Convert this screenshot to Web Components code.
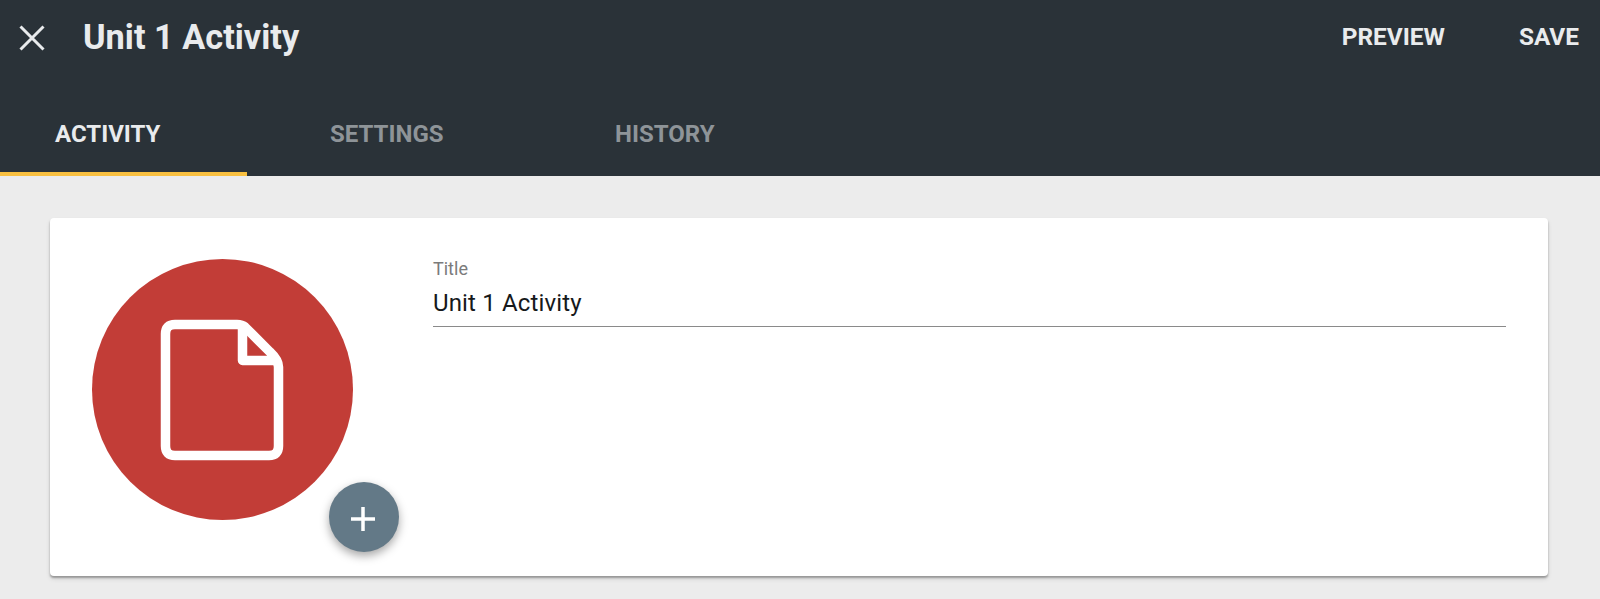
<!DOCTYPE html>
<html>
<head>
<meta charset="utf-8">
<title>Unit 1 Activity</title>
<style>
  html, body { margin: 0; height: 100%; }
  body { background: #ececec; font-family: Roboto, sans-serif; overflow: hidden; }
</style>
</head>
<body>
<activity-editor></activity-editor>

<script>
class TopBar extends HTMLElement {
  constructor() {
    super();
    const shadow = this.attachShadow({ mode: 'open' });
    shadow.innerHTML = `
      <style>
      :host {
        display: flex;
        align-items: center;
        height: 75px;
        color: #e9ebed;
      }
      svg { display: block; width: 26px; height: 26px; margin-left: 19px; }
      h1 {
        flex: 1;
        margin: 0 0 1px 38px;
        font-size: 34.300px;
        font-weight: 700;
        line-height: 72px;
      }
      .action { font-size: 24.400px; font-weight: 700; margin-bottom: 3px; }
      .preview { margin-right: 74px; }
      .save { margin-right: 21px; }
      </style>
      <svg viewBox="0 0 26 26"><path d="M1.500 1.500L24.500 24.500M24.500 1.500L1.500 24.500" stroke="#e9ebed" stroke-width="3" fill="none"/></svg>
      <h1><slot></slot></h1>
      <span class="action preview">PREVIEW</span>
      <span class="action save">SAVE</span>
    `;
  }
}

class TabBar extends HTMLElement {
  constructor() {
    super();
    const shadow = this.attachShadow({ mode: 'open' });
    shadow.innerHTML = `
      <style>
      :host { display: flex; height: 101px; }
      </style>
      <slot></slot>
    `;
  }
}

class TabItem extends HTMLElement {
  constructor() {
    super();
    const shadow = this.attachShadow({ mode: 'open' });
    shadow.innerHTML = `
      <style>
      :host {
        display: flex;
        box-sizing: border-box;
        width: 285px;
        height: 101px;
        padding: 45px 0 0 83px;
        font-size: 24px;
        font-weight: 700;
        color: #8e9498;
      }
      :host([active]) {
        width: 247px;
        padding-left: 55px;
        color: #e9ebed;
        border-bottom: 4px solid #f9c040;
      }
      </style>
      <slot></slot>
    `;
  }
}

class AvatarPicker extends HTMLElement {
  constructor() {
    super();
    const shadow = this.attachShadow({ mode: 'open' });
    shadow.innerHTML = `
      <style>
      :host {
        display: block;
        position: relative;
        flex: none;
        width: 261px;
        height: 261px;
      }
      .circle {
        display: flex;
        align-items: center;
        justify-content: center;
        width: 261px;
        height: 261px;
        border-radius: 50%;
        background: #c23d37;
      }
      .doc { display: block; width: 124px; height: 142px; margin-right: 1px; }
      .fab {
        position: absolute;
        left: 237px;
        top: 223px;
        display: flex;
        align-items: center;
        justify-content: center;
        width: 70px;
        height: 70px;
        border-radius: 50%;
        background: #637987;
        box-shadow: 0 4px 10px rgba(0,0,0,.35);
      }
      .fab svg { display: block; width: 26px; height: 26px; margin: 3px 2px 0 0; }
      </style>
      <div class="circle">
        <svg class="doc" viewBox="0 0 124 142">
          <path d="M15 5.500H77Q82 5.500 85 8L110 33Q118.500 41 118.500 48V127Q118.500 136.500 109 136.500H15Q5.500 136.500 5.500 127V15Q5.500 5.500 15 5.500Z" fill="none" stroke="#fff" stroke-width="9.500" stroke-linejoin="round"/>
          <path d="M82.500 6V41.500H118" fill="none" stroke="#fff" stroke-width="9.500" stroke-linejoin="round"/>
        </svg>
      </div>
      <div class="fab">
        <svg viewBox="0 0 26 26"><path d="M13 1V25M1 13H25" stroke="#fff" stroke-width="3.500" fill="none"/></svg>
      </div>
    `;
  }
}

class TitleField extends HTMLElement {
  constructor() {
    super();
    const shadow = this.attachShadow({ mode: 'open' });
    shadow.innerHTML = `
      <style>
      :host {
        display: block;
        flex: 1;
        box-sizing: border-box;
        margin-left: 80px;
        height: 68px;
        border-bottom: 1px solid #8a8a8a;
      }
      label {
        display: block;
        font-size: 18px;
        line-height: 20px;
        color: #7b7b7b;
      }
      .value {
        margin-top: 9px;
        font-size: 24px;
        letter-spacing: .15px;
        line-height: 30px;
        color: #16191b;
      }
      </style>
      <label></label>
      <div class="value"><slot></slot></div>
    `;
  }

  connectedCallback() {
    this.shadowRoot.querySelector('label').textContent = this.getAttribute('label');
  }
}

class EditorCard extends HTMLElement {
  constructor() {
    super();
    const shadow = this.attachShadow({ mode: 'open' });
    shadow.innerHTML = `
      <style>
      :host {
        display: flex;
        align-items: flex-start;
        box-sizing: border-box;
        height: 358px;
        margin: 42px 52px 0 50px;
        padding: 41px 42px 0 42px;
        border-radius: 4px;
        background: #fff;
        box-shadow: 0 2px 2px rgba(0,0,0,.3), 0 3px 5px rgba(0,0,0,.1);
      }
      </style>
      <slot></slot>
    `;
  }
}

class ActivityEditor extends HTMLElement {
  constructor() {
    super();
    const shadow = this.attachShadow({ mode: 'open' });
    shadow.innerHTML = `
      <style>
      :host { display: block; }
      header { background: #2a3238; height: 176px; }
      </style>
      <header>
        <top-bar>Unit 1 Activity</top-bar>
        <tab-bar>
          <tab-item active>ACTIVITY</tab-item>
          <tab-item>SETTINGS</tab-item>
          <tab-item>HISTORY</tab-item>
        </tab-bar>
      </header>
      <editor-card>
        <avatar-picker></avatar-picker>
        <title-field label="Title">Unit 1 Activity</title-field>
      </editor-card>
    `;
  }
}

window.customElements.define('top-bar', TopBar);
window.customElements.define('tab-bar', TabBar);
window.customElements.define('tab-item', TabItem);
window.customElements.define('avatar-picker', AvatarPicker);
window.customElements.define('title-field', TitleField);
window.customElements.define('editor-card', EditorCard);
window.customElements.define('activity-editor', ActivityEditor);
</script>
</body>
</html>
